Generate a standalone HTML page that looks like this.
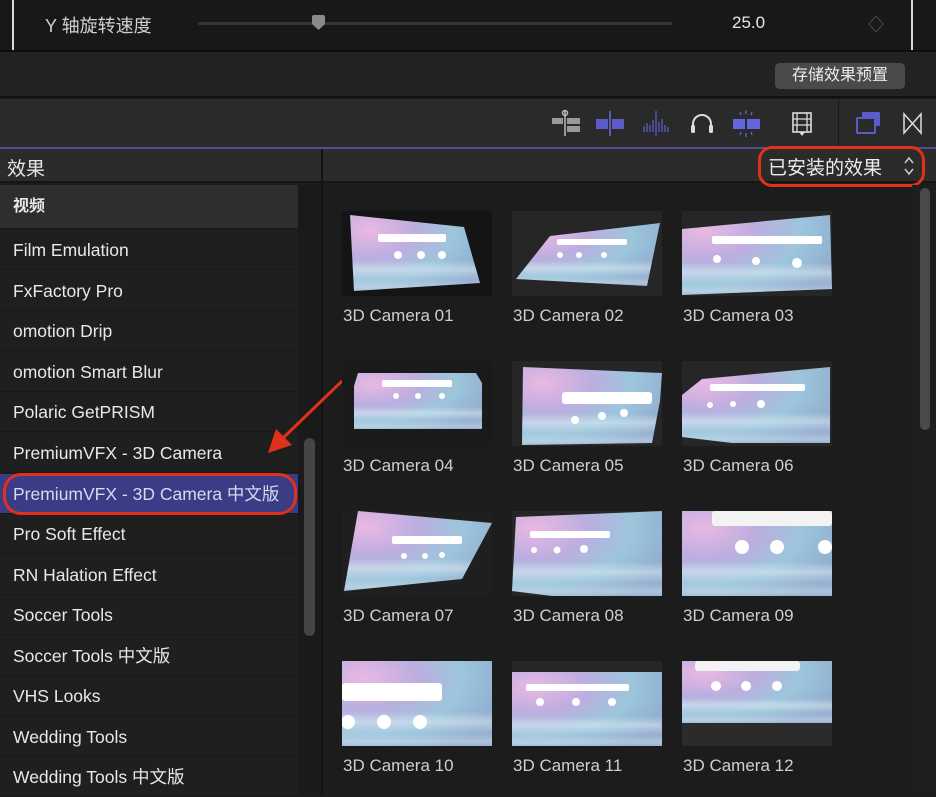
<!DOCTYPE html>
<html><head><meta charset="utf-8">
<style>
*{margin:0;padding:0;box-sizing:border-box}
body{width:936px;height:794px;overflow:hidden;background:#1c1c1c;font-family:"Liberation Sans","Noto Sans CJK SC",sans-serif;color:#e6e6e6;position:relative}
.abs{position:absolute}
.row{position:absolute;left:0;width:298px;height:40px;font-size:17.5px;padding-left:13px;line-height:40px;color:#e8e8e8;border-bottom:1px solid #191919}
.lbl{position:absolute;font-size:17px;color:#cfcfcf}
svg.t{position:absolute;width:150px;height:85px}
</style></head><body>
<svg width="0" height="0" style="position:absolute">
<defs>
<radialGradient id="g" cx="0.15" cy="0.2" r="1">
<stop offset="0" stop-color="#eab8e2"/><stop offset="0.35" stop-color="#bcaee0"/><stop offset="0.65" stop-color="#9cc6dc"/><stop offset="1" stop-color="#8fa8cc"/></radialGradient>
<linearGradient id="h" x1="0" y1="0" x2="0" y2="1">
<stop offset="0" stop-color="#fff" stop-opacity="0"/><stop offset="0.6" stop-color="#fff" stop-opacity="0"/><stop offset="0.72" stop-color="#eef6fa" stop-opacity="0.45"/><stop offset="0.85" stop-color="#c8e2ee" stop-opacity="0.15"/><stop offset="0.95" stop-color="#eef6fa" stop-opacity="0.35"/><stop offset="1" stop-color="#fff" stop-opacity="0.1"/></linearGradient>
</defs></svg>

<div class="abs" style="left:0;top:0;width:936px;height:52px;background:#181818;border-bottom:2px solid #0e0e0e"></div>
<div class="abs" style="left:12px;top:0;width:2px;height:50px;background:#d8d8d8"></div>
<div class="abs" style="left:911px;top:0;width:2px;height:50px;background:#d8d8d8"></div>
<div class="abs" style="left:45px;top:12px;font-size:18px;color:#d0d0d0">Y 轴旋转速度</div>
<div class="abs" style="left:198px;top:22px;width:474px;height:3px;background:#353535;border-radius:2px"></div>
<svg class="abs" style="left:311px;top:15px" width="15" height="16"><path d="M1 2 Q1 0 3 0 H12 Q14 0 14 2 V9 L7.5 15 L1 9 Z" fill="#8a8a8a"/></svg>
<div class="abs" style="left:732px;top:13px;font-size:17px;color:#e8e8e8">25.0</div>
<svg class="abs" style="left:867px;top:15px" width="18" height="18"><path d="M9 1 L16 9 L9 17 L2 9 Z" fill="none" stroke="#444" stroke-width="1.2"/></svg>

<div class="abs" style="left:0;top:52px;width:936px;height:46px;background:#232323;border-bottom:2px solid #111"></div>
<div class="abs" style="left:775px;top:63px;width:130px;height:26px;background:#4a4a4a;border-radius:5px;font-size:16px;line-height:26px;text-align:center;color:#ececec">存储效果预置</div>

<div class="abs" style="left:0;top:99px;width:936px;height:48px;background:#2a2a2a"></div>
<div class="abs" style="left:838px;top:99px;width:1px;height:48px;background:#1a1a1a"></div>
<div class="abs" style="left:0;top:147px;width:936px;height:2px;background:#4d4f9a"></div>
<svg class="abs" style="left:548px;top:108px" width="380" height="32">
<line x1="17" y1="3" x2="17" y2="28" stroke="#bbb" stroke-width="1.5"/><circle cx="17" cy="5" r="2.5" fill="none" stroke="#bbb" stroke-width="1.5"/>
<rect x="4" y="10" width="11" height="6" fill="#999"/><rect x="19" y="10" width="13" height="6" fill="#999"/><rect x="19" y="18" width="13" height="6" fill="#999"/>
<rect x="48" y="11" width="12" height="10" fill="#5a5cc8"/><rect x="64" y="11" width="12" height="10" fill="#5a5cc8"/><line x1="62" y1="3" x2="62" y2="28" stroke="#6a6cd8" stroke-width="1.5"/>
<g stroke="#5a5cc8" stroke-width="1.3"><line x1="96" y1="18" x2="96" y2="24"/><line x1="99" y1="15" x2="99" y2="24"/><line x1="102" y1="17" x2="102" y2="24"/><line x1="105" y1="12" x2="105" y2="24"/><line x1="108" y1="3" x2="108" y2="28"/><line x1="111" y1="14" x2="111" y2="24"/><line x1="114" y1="11" x2="114" y2="24"/><line x1="117" y1="17" x2="117" y2="24"/><line x1="120" y1="19" x2="120" y2="24"/></g>
<path d="M145 23 V16 A9 9 0 0 1 163 16 V23" fill="none" stroke="#ddd" stroke-width="2"/><rect x="143" y="17" width="4" height="8" rx="1.5" fill="#ddd"/><rect x="161" y="17" width="4" height="8" rx="1.5" fill="#ddd"/>
<rect x="185" y="11" width="12" height="10" fill="#6466e0"/><rect x="199" y="11" width="13" height="10" fill="#6466e0"/>
<g stroke="#6466e0" stroke-width="1.2"><line x1="198" y1="2" x2="198" y2="6"/><line x1="192" y1="4" x2="193" y2="7"/><line x1="204" y1="4" x2="203" y2="7"/><line x1="198" y1="25" x2="198" y2="29"/><line x1="192" y1="27" x2="193" y2="24"/><line x1="204" y1="27" x2="203" y2="24"/></g>
<rect x="245" y="5" width="18" height="19" fill="none" stroke="#ddd" stroke-width="1.6"/><line x1="249" y1="5" x2="249" y2="24" stroke="#ddd" stroke-width="1.3"/><line x1="259" y1="5" x2="259" y2="24" stroke="#ddd" stroke-width="1.3"/><line x1="245" y1="11" x2="263" y2="11" stroke="#ddd" stroke-width="1.3"/><line x1="245" y1="17" x2="263" y2="17" stroke="#ddd" stroke-width="1.3"/><path d="M251 24 L254 28 L257 24Z" fill="#ddd"/>
<rect x="314" y="4" width="18" height="14" rx="1" fill="#5a5cc8"/><rect x="309" y="10" width="18" height="15" rx="1" fill="#2a2a2a" stroke="#5a5cc8" stroke-width="2"/>
<path d="M356 6 V25 L373 6 V25 Z" fill="none" stroke="#ddd" stroke-width="1.5"/>
</svg>

<div class="abs" style="left:0;top:149px;width:936px;height:34px;background:#2b2b2b;border-bottom:2px solid #151515"></div>
<div class="abs" style="left:321px;top:149px;width:2px;height:645px;background:#121212"></div>
<div class="abs" style="left:7px;top:154px;font-size:19px;color:#e6e6e6">效果</div>
<div class="abs" style="left:758px;top:146px;width:167px;height:41px;border:3px solid #e0311c;border-radius:14px"></div>
<div class="abs" style="left:768px;top:153px;font-size:19px;color:#ececec">已安装的效果</div>
<svg class="abs" style="left:902px;top:155px" width="14" height="22"><path d="M3 8 L7 3 L11 8 M3 14 L7 19 L11 14" fill="none" stroke="#ccc" stroke-width="1.5"/></svg>

<div class="abs" style="left:0;top:185px;width:298px;height:609px;background:#1f1f1f"></div>
<div class="abs" style="left:298px;top:185px;width:23px;height:609px;background:#1a1a1a"></div>
<div class="abs" style="left:304px;top:438px;width:11px;height:198px;background:#454545;border-radius:6px"></div>
<div class="row" style="top:185px;height:44px;line-height:44px;background:#2e2e2e;font-weight:bold;font-size:16px">视频</div>
<div class="row" style="top:230px">Film Emulation</div>
<div class="row" style="top:271px">FxFactory Pro</div>
<div class="row" style="top:311px">omotion Drip</div>
<div class="row" style="top:352px">omotion Smart Blur</div>
<div class="row" style="top:392px">Polaric GetPRISM</div>
<div class="row" style="top:433px">PremiumVFX - 3D Camera</div>
<div class="row" style="top:474px;background:#3a3c86;color:#d8d8ee">PremiumVFX - 3D Camera 中文版</div>
<div class="abs" style="left:3px;top:473px;width:294px;height:42px;border:3px solid #e0311c;border-radius:18px"></div>
<div class="row" style="top:514px">Pro Soft Effect</div>
<div class="row" style="top:555px">RN Halation Effect</div>
<div class="row" style="top:595px">Soccer Tools</div>
<div class="row" style="top:636px">Soccer Tools 中文版</div>
<div class="row" style="top:676px">VHS Looks</div>
<div class="row" style="top:717px">Wedding Tools</div>
<div class="row" style="top:757px">Wedding Tools 中文版</div>

<svg class="abs" style="left:260px;top:375px" width="90" height="90"><line x1="82" y1="6" x2="22" y2="64" stroke="#e0311c" stroke-width="3"/><path d="M8 78 L16 54 L32 70 Z" fill="#e0311c"/></svg>

<div class="abs" style="left:912px;top:185px;width:24px;height:609px;background:#1e1e1e"></div>
<div class="abs" style="left:920px;top:188px;width:10px;height:242px;background:#4a4a4a;border-radius:5px"></div>

<svg class="t" style="left:342px;top:211px" viewBox="0 0 150 85"><rect width="150" height="85" fill="#141414"/><polygon points="8,4 122,16 138,72 12,80" fill="url(#g)"/><polygon points="8,4 122,16 138,72 12,80" fill="url(#h)"/><rect x="36" y="23" width="68" height="8" rx="2" fill="#fff"/><circle cx="56" cy="44" r="4" fill="#fff"/><circle cx="79" cy="44" r="4" fill="#fff"/><circle cx="100" cy="44" r="4" fill="#fff"/></svg>
<svg class="t" style="left:512px;top:211px" viewBox="0 0 150 85"><rect width="150" height="85" fill="#262626"/><polygon points="38,25 148,12 135,75 4,68" fill="url(#g)"/><polygon points="38,25 148,12 135,75 4,68" fill="url(#h)"/><rect x="45" y="28" width="70" height="6" rx="2" fill="#fff"/><circle cx="48" cy="44" r="3" fill="#fff"/><circle cx="67" cy="44" r="3" fill="#fff"/><circle cx="92" cy="44" r="3" fill="#fff"/></svg>
<svg class="t" style="left:682px;top:211px" viewBox="0 0 150 85"><rect width="150" height="85" fill="#262626"/><polygon points="0,18 148,4 150,78 0,84" fill="url(#g)"/><polygon points="0,18 148,4 150,78 0,84" fill="url(#h)"/><rect x="30" y="25" width="110" height="8" rx="2" fill="#fff"/><circle cx="35" cy="48" r="4" fill="#fff"/><circle cx="74" cy="50" r="4" fill="#fff"/><circle cx="115" cy="52" r="5" fill="#fff"/></svg>

<svg class="t" style="left:342px;top:361px" viewBox="0 0 150 85"><rect width="150" height="85" fill="#1a1a1a"/><polygon points="16,12 134,12 140,22 140,68 12,68 12,25" fill="url(#g)"/><polygon points="16,12 134,12 140,22 140,68 12,68 12,25" fill="url(#h)"/><rect x="40" y="19" width="70" height="7" rx="2" fill="#fff"/><circle cx="54" cy="35" r="3" fill="#fff"/><circle cx="76" cy="35" r="3" fill="#fff"/><circle cx="100" cy="35" r="3" fill="#fff"/></svg>
<svg class="t" style="left:512px;top:361px" viewBox="0 0 150 85"><rect width="150" height="85" fill="#262626"/><polygon points="11,6 150,12 148,40 140,82 10,84" fill="url(#g)"/><polygon points="11,6 150,12 148,40 140,82 10,84" fill="url(#h)"/><rect x="50" y="31" width="90" height="12" rx="3" fill="#fff"/><circle cx="63" cy="59" r="4" fill="#fff"/><circle cx="90" cy="55" r="4" fill="#fff"/><circle cx="112" cy="52" r="4" fill="#fff"/></svg>
<svg class="t" style="left:682px;top:361px" viewBox="0 0 150 85"><rect width="150" height="85" fill="#262626"/><polygon points="20,18 148,6 148,82 50,82 0,76 0,34" fill="url(#g)"/><polygon points="20,18 148,6 148,82 50,82 0,76 0,34" fill="url(#h)"/><rect x="28" y="23" width="95" height="7" rx="2" fill="#fff"/><circle cx="28" cy="44" r="3" fill="#fff"/><circle cx="51" cy="43" r="3" fill="#fff"/><circle cx="79" cy="43" r="4" fill="#fff"/></svg>

<svg class="t" style="left:342px;top:511px" viewBox="0 0 150 85"><rect width="150" height="85" fill="#1f1f1f"/><polygon points="16,0 150,12 120,68 2,80" fill="url(#g)"/><polygon points="16,0 150,12 120,68 2,80" fill="url(#h)"/><rect x="50" y="25" width="70" height="8" rx="2" fill="#fff"/><circle cx="62" cy="45" r="3" fill="#fff"/><circle cx="83" cy="45" r="3" fill="#fff"/><circle cx="100" cy="44" r="3" fill="#fff"/></svg>
<svg class="t" style="left:512px;top:511px" viewBox="0 0 150 85"><rect width="150" height="85" fill="#262626"/><polygon points="4,6 150,0 150,85 40,85 0,80" fill="url(#g)"/><polygon points="4,6 150,0 150,85 40,85 0,80" fill="url(#h)"/><rect x="18" y="20" width="80" height="7" rx="2" fill="#fff"/><circle cx="22" cy="39" r="3" fill="#fff"/><circle cx="45" cy="39" r="3.5" fill="#fff"/><circle cx="72" cy="38" r="4" fill="#fff"/></svg>
<svg class="t" style="left:682px;top:511px" viewBox="0 0 150 85"><rect width="150" height="85" fill="url(#g)"/><rect width="150" height="85" fill="url(#h)"/><rect x="30" y="0" width="120" height="15" rx="3" fill="#f3f3f3"/><circle cx="60" cy="36" r="7" fill="#fff"/><circle cx="95" cy="36" r="7" fill="#fff"/><circle cx="143" cy="36" r="7" fill="#fff"/></svg>

<svg class="t" style="left:342px;top:661px" viewBox="0 0 150 85"><rect width="150" height="85" fill="url(#g)"/><rect width="150" height="85" fill="url(#h)"/><rect x="0" y="22" width="100" height="18" rx="3" fill="#fff"/><circle cx="6" cy="61" r="7" fill="#fff"/><circle cx="42" cy="61" r="7" fill="#fff"/><circle cx="78" cy="61" r="7" fill="#fff"/></svg>
<svg class="t" style="left:512px;top:661px" viewBox="0 0 150 85"><rect width="150" height="85" fill="#262626"/><rect y="11" width="150" height="74" fill="url(#g)"/><rect y="11" width="150" height="74" fill="url(#h)"/><rect x="14" y="23" width="103" height="7" rx="2" fill="#fff"/><circle cx="28" cy="41" r="4" fill="#fff"/><circle cx="64" cy="41" r="4" fill="#fff"/><circle cx="100" cy="41" r="4" fill="#fff"/></svg>
<svg class="t" style="left:682px;top:661px" viewBox="0 0 150 85"><rect width="150" height="85" fill="#2b2b2b"/><rect width="150" height="62" fill="url(#g)"/><rect width="150" height="62" fill="url(#h)"/><rect x="13" y="0" width="105" height="10" rx="3" fill="#f3f3f3"/><circle cx="34" cy="25" r="5" fill="#fff"/><circle cx="64" cy="25" r="5" fill="#fff"/><circle cx="95" cy="25" r="5" fill="#fff"/></svg>

<div class="lbl" style="left:343px;top:306px">3D Camera 01</div>
<div class="lbl" style="left:513px;top:306px">3D Camera 02</div>
<div class="lbl" style="left:683px;top:306px">3D Camera 03</div>
<div class="lbl" style="left:343px;top:456px">3D Camera 04</div>
<div class="lbl" style="left:513px;top:456px">3D Camera 05</div>
<div class="lbl" style="left:683px;top:456px">3D Camera 06</div>
<div class="lbl" style="left:343px;top:606px">3D Camera 07</div>
<div class="lbl" style="left:513px;top:606px">3D Camera 08</div>
<div class="lbl" style="left:683px;top:606px">3D Camera 09</div>
<div class="lbl" style="left:343px;top:756px">3D Camera 10</div>
<div class="lbl" style="left:513px;top:756px">3D Camera 11</div>
<div class="lbl" style="left:683px;top:756px">3D Camera 12</div>
</body></html>
